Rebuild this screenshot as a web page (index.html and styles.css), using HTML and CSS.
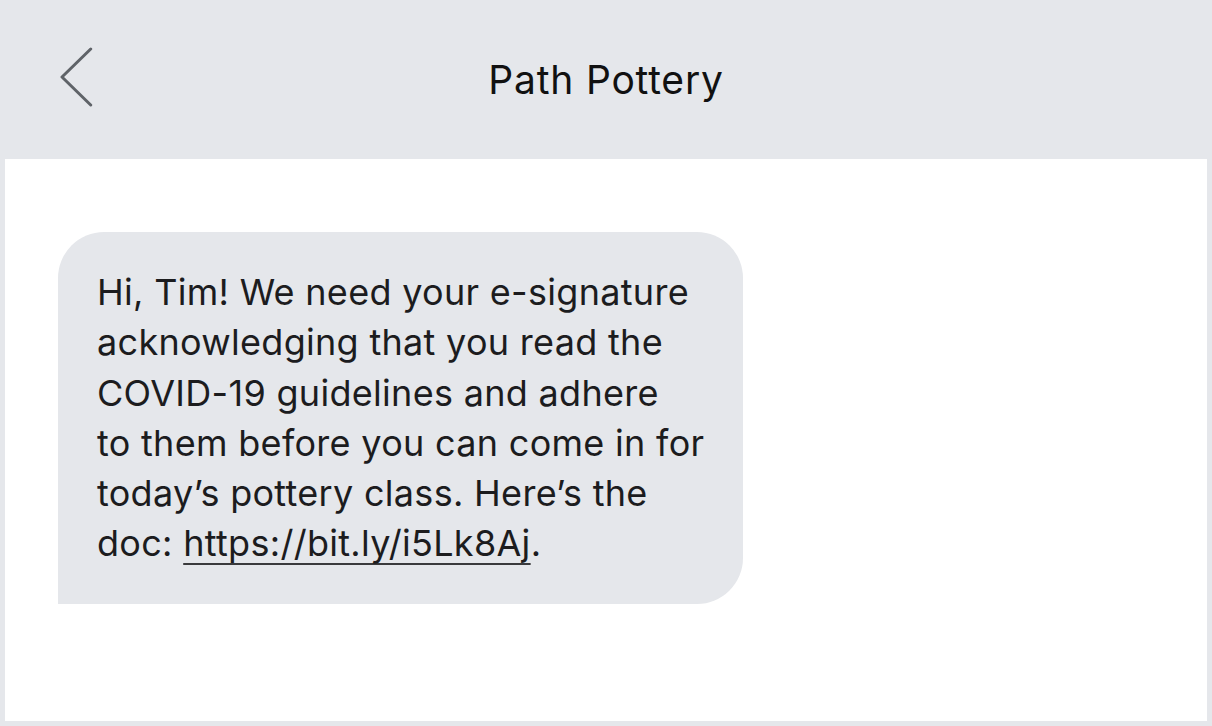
FILE: index.html
```html
<!DOCTYPE html>
<html>
<head>
  <title>Path Pottery</title>
  <link rel="stylesheet" href="styles.css">
</head>
<body>
  <div class="screen">
    <div class="nav-bar">
      <div class="back-btn" aria-label="Back">
        <svg width="34" height="62" viewBox="0 0 34 62">
          <polyline points="30.7,3 2,31 30.7,59" fill="none" stroke="#5f6368" stroke-width="3" stroke-linecap="round" stroke-linejoin="round"/>
        </svg>
      </div>
      <h1 class="nav-title">Path Pottery</h1>
    </div>

    <div class="thread">
      <div class="bubble incoming">
        Hi, Tim! We need your e-signature<br>
        acknowledging that you read the<br>
        COVID-19 guidelines and adhere<br>
        to them before you can come in for<br>
        today’s pottery class. Here’s the<br>
        doc: <a href="#" class="link">https://bit.ly/i5Lk8Aj</a>.
      </div>
    </div>
  </div>
</body>
</html>
```

FILE: styles.css
```css
* {
  margin: 0;
  padding: 0;
  box-sizing: border-box;
}

html, body {
  width: 1212px;
  height: 726px;
  overflow: hidden;
}

body {
  font-family: Inter, Roboto, "Liberation Sans", sans-serif;
  background: #e5e7eb;
  color: #1c1c1e;
}

.screen {
  display: flex;
  flex-direction: column;
  height: 100%;
  padding: 0 5px 5px;
}

.nav-bar {
  position: relative;
  height: 159px;
  display: flex;
  align-items: center;
  justify-content: center;
  flex-shrink: 0;
}

.back-btn {
  position: absolute;
  left: 55px;
  top: 46px;
  line-height: 0;
  cursor: pointer;
}

.nav-title {
  font-size: 39px;
  font-weight: 400;
  color: #111;
  letter-spacing: 0.8px;
  margin-top: 0;
}

.thread {
  flex: 1;
  background: #fff;
  padding: 73px 53px;
}

.bubble {
  width: 685px;
  height: 372px;
  padding: 35px 10px 0 39px;
  background: #e5e7eb;
  border-radius: 46px 46px 46px 0;
  font-size: 36px;
  line-height: 50.3px;
  letter-spacing: 0.3px;
  color: #1c1c1e;
}

.link {
  color: inherit;
  text-decoration: underline;
  text-decoration-color: #3a3a3c;
  text-decoration-thickness: 2px;
  text-underline-offset: 7px;
}
```
